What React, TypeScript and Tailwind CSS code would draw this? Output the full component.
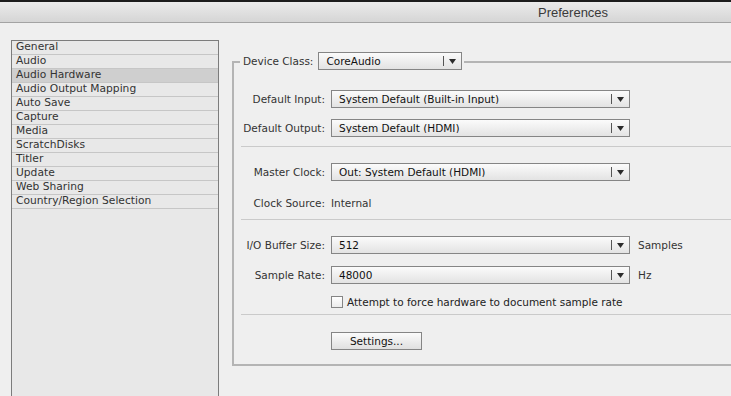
import React from 'react'

const font = "font-['DejaVu_Sans',sans-serif]"

const sections = [
  'General',
  'Audio',
  'Audio Hardware',
  'Audio Output Mapping',
  'Auto Save',
  'Capture',
  'Media',
  'ScratchDisks',
  'Titler',
  'Update',
  'Web Sharing',
  'Country/Region Selection',
]

function Arrow() {
  return (
    <svg width="7" height="5" viewBox="0 0 7 5">
      <path d="M0 0H7L3.5 5Z" fill="#2b2b2b" />
    </svg>
  )
}

function Select({ value, width }: { value: string; width: string }) {
  return (
    <div
      className={`${width} shrink-0 h-[18px] flex items-center border border-[#858585] bg-gradient-to-b from-[#fbfbfb] to-[#e3e3e3] text-[#111]`}
    >
      <span className="flex-1 pl-[7px] truncate">{value}</span>
      <span className="w-px h-[10px] bg-[#555]" />
      <span className="w-[17px] flex justify-center">
        <Arrow />
      </span>
    </div>
  )
}

function Row({ label, value, unit, className = '' }: { label: string; value: string; unit?: string; className?: string }) {
  return (
    <div className={`flex items-center pl-[2px] ${className}`}>
      <span className="w-[82px] shrink-0 text-right whitespace-nowrap text-[#333]">{label}</span>
      <span className="w-[6px] shrink-0" />
      <Select value={value} width="w-[299px]" />
      {unit && <span className="ml-[8px] text-[#333]">{unit}</span>}
    </div>
  )
}

export default function App() {
  return (
    <div className={`w-[731px] h-[396px] overflow-hidden bg-[#efefef] text-[10.5px] leading-none ${font}`}>
      <div className="h-[23px] border-t-2 border-t-[#1c1c1c] border-b border-b-[#a3a3a3] bg-gradient-to-b from-[#ebebeb] to-[#d5d5d5] flex items-center">
        <span className="pl-[538px] font-['Liberation_Sans',sans-serif] text-[13px] text-[#3a3a3a]">Preferences</span>
      </div>

      <div className="flex items-start">
        <div className="shrink-0 ml-[11px] mt-[17px] w-[208px] h-[400px] border border-[#7c7c7c] bg-[#e8e8e8]">
          {sections.map((s) => (
            <div
              key={s}
              className={`h-[14px] border-b border-[#c6c6c6] pl-[4px] flex items-center text-[10.7px] text-[#333] ${
                s === 'Audio Hardware' ? 'bg-[#cfcfcf]' : ''
              }`}
            >
              {s}
            </div>
          ))}
        </div>

        <div className="shrink-0 relative ml-[13px] mt-[38px] w-[520px] border-2 border-[#b4b4b4] pl-[7px] pb-[14px] flex flex-col">
          <div className="absolute left-[6px] top-[-11px] flex items-center gap-[5px] bg-[#efefef] pl-[3px] pr-[2px]">
            <span className="text-[#333]">Device Class:</span>
            <Select value="CoreAudio" width="w-[144px]" />
          </div>

          <Row className="mt-[27px]" label="Default Input:" value="System Default (Built-in Input)" />
          <Row className="mt-[11px]" label="Default Output:" value="System Default (HDMI)" />
          <div className="mt-[9px] h-px bg-[#cacaca]" />
          <Row className="mt-[16px]" label="Master Clock:" value="Out: System Default (HDMI)" />
          <div className="mt-[13px] pl-[2px] h-[18px] flex items-center text-[#333]">
            <span className="w-[82px] text-right">Clock Source:</span>
            <span className="ml-[6px]">Internal</span>
          </div>
          <div className="mt-[7px] h-px bg-[#cacaca]" />
          <Row className="mt-[16px]" label="I/O Buffer Size:" value="512" unit="Samples" />
          <Row className="mt-[12px]" label="Sample Rate:" value="48000" unit="Hz" />
          <div className="mt-[12px] ml-[90px] h-[12px] flex items-center gap-[4px]">
            <span className="shrink-0 w-[12px] h-[12px] border border-[#858585] bg-gradient-to-b from-white to-[#ececec]" />
            <span className="text-[#222]">Attempt to force hardware to document sample rate</span>
          </div>
          <div className="mt-[6px] h-px bg-[#cacaca]" />
          <div className="mt-[17px] ml-[90px] w-[91px] h-[18px] border border-[#858585] bg-gradient-to-b from-[#fbfbfb] to-[#e0e0e0] flex items-center justify-center text-[#111]">
            Settings...
          </div>
        </div>
      </div>
    </div>
  )
}
